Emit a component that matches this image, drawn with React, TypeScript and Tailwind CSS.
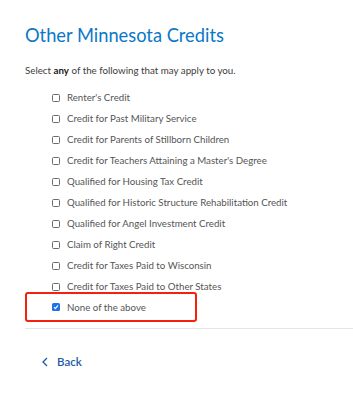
import React from 'react';

const credits = [
  "Renter's Credit",
  'Credit for Past Military Service',
  'Credit for Parents of Stillborn Children',
  "Credit for Teachers Attaining a Master's Degree",
  'Qualified for Housing Tax Credit',
  'Qualified for Historic Structure Rehabilitation Credit',
  'Qualified for Angel Investment Credit',
  'Claim of Right Credit',
  'Credit for Taxes Paid to Wisconsin',
  'Credit for Taxes Paid to Other States',
];

function Box({ checked }: { checked?: boolean }) {
  if (checked) {
    return (
      <span className="w-[8px] h-[8px] rounded-[1.5px] bg-[#1a73e8] flex items-center justify-center shrink-0">
        <svg width="6" height="6" viewBox="0 0 6 6" fill="none">
          <path d="M1 3.2 L2.4 4.6 L5 1.4" stroke="white" strokeWidth="1.2" />
        </svg>
      </span>
    );
  }
  return <span className="w-[8px] h-[8px] rounded-[1.5px] border border-[#6b6b6b] bg-white shrink-0" />;
}

export default function App() {
  return (
    <div className="w-[353px] h-[403px] bg-white overflow-hidden font-['Lato','Noto_Sans',sans-serif]">
      <div className="pl-[25px] pt-[23px]">
        {/* heading */}
        <h1 className="text-[18.3px] leading-[24px] text-[#0a77c8]">Other Minnesota Credits</h1>
        <p className="mt-[17px] text-[9.75px] leading-[12px] text-[#3d3d3d]">
          Select <span className="font-bold text-[#222]">any</span> of the following that may apply to you.
        </p>

        {/* options */}
        <div className="mt-[11px] flex flex-col">
          {credits.map((c) => (
            <div key={c} className="h-[21px] flex items-center gap-[7px] pl-[27px]">
              <Box />
              <span className="text-[9.7px] text-[#555]">{c}</span>
            </div>
          ))}
          <div className="mt-[-5px] w-[172px] h-[30px] border-2 border-[#f5210f] rounded-[3px] flex items-center gap-[7px] pl-[25px]">
            <Box checked />
            <span className="text-[9.7px] text-[#555]">None of the above</span>
          </div>
        </div>

        <div className="mt-[6px] h-px bg-[#e6e6e6]" />

        <div className="mt-[24px] pl-[17px] flex items-center gap-[9px] text-[#1d5aa6]">
          <svg width="6" height="10" viewBox="0 0 6 10" fill="none">
            <path d="M5 1 L1 5 L5 9" stroke="currentColor" strokeWidth="1.3" />
          </svg>
          <span className="text-[11.5px] font-semibold">Back</span>
        </div>
      </div>
    </div>
  );
}
